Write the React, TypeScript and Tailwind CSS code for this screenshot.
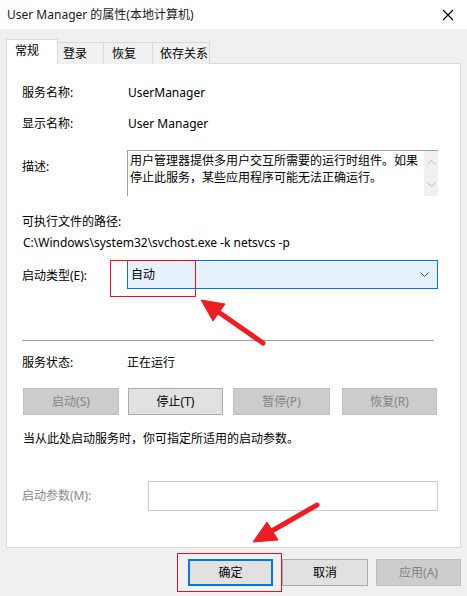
import React from 'react';

const font = { fontFamily: '"Noto Sans", "Noto Sans CJK SC", sans-serif' };

function Tab({ label, active, w, pl }: { label: string; active?: boolean; w: string; pl: string }) {
  return active ? (
    <div className={`relative z-10 h-[25px] bg-white border border-b-0 border-[#d9d9d9] flex items-center ${w} ${pl}`}>
      <span className="-mt-[3px]">{label}</span>
    </div>
  ) : (
    <div className={`h-[22px] bg-[#f0f0f0] border border-b-0 border-[#d9d9d9] -ml-px flex items-center ${w} ${pl}`}>
      <span>{label}</span>
    </div>
  );
}

function Btn({ label, disabled, w, className = '' }: { label: string; disabled?: boolean; w: string; className?: string }) {
  return (
    <div
      className={`h-[27px] flex items-center justify-center border ${w} ${className} ${
        disabled ? 'bg-[#cccccc] border-[#bfbfbf] text-[#838383]' : 'bg-[#e1e1e1] border-[#adadad] text-black'
      }`}
    >
      {label}
    </div>
  );
}

function Chevron({ up, color = '#606060' }: { up?: boolean; color?: string }) {
  return (
    <svg width="9" height="5" viewBox="0 0 9 5">
      <path d={up ? 'M0.5 4.5 L4.5 0.5 L8.5 4.5' : 'M0.5 0.5 L4.5 4.5 L8.5 0.5'} fill="none" stroke={color} strokeWidth="1" />
    </svg>
  );
}

export default function App() {
  return (
    <div style={font} className="relative w-[467px] h-[596px] bg-[#f0f0f0] text-[12px] text-black overflow-hidden">
      {/* title bar */}
      <div className="h-[29px] bg-white flex items-stretch">
        <div className="flex-1 flex items-center pl-[7px] text-[#1a1a1a]">User Manager 的属性(本地计算机)</div>
        <div className="w-[38px] flex items-center justify-center">
          <svg width="12" height="12" viewBox="0 0 12 12">
            <path d="M1 1 L11 11 M11 1 L1 11" stroke="#000000" strokeWidth="1.1" fill="none" />
          </svg>
        </div>
      </div>

      {/* tabs */}
      <div className="mt-[10px] ml-[6px] h-[25px] flex items-end">
        <Tab label="常规" active w="w-[52px]" pl="pl-[8px]" />
        <Tab label="登录" w="w-[47px]" pl="pl-[5px]" />
        <Tab label="恢复" w="w-[50px]" pl="pl-[8px]" />
        <Tab label="依存关系" w="w-[58px]" pl="pl-[7px]" />
      </div>

      {/* panel */}
      <div className="-mt-px ml-[6px] w-[455px] h-[485px] bg-white border border-[#d9d9d9] px-[15px] flex flex-col">
        <div className="mt-[19px] h-[20px] flex items-center">
          <span className="w-[105px]">服务名称:</span>
          <span className="pl-px">UserManager</span>
        </div>
        <div className="mt-[11px] h-[20px] flex items-center">
          <span className="w-[105px]">显示名称:</span>
          <span className="pl-px">User Manager</span>
        </div>
        <div className="mt-[16px] h-[46px] flex items-start">
          <span className="w-[105px] mt-[7px] leading-[20px]">描述:</span>
          <div className="w-[311px] h-[46px] border-t border-l border-[#a0a0a0] flex">
            <div className="flex-1 pl-[2px] pt-px leading-[17px] text-[12px]">
              用户管理器提供多用户交互所需要的运行时组件。如果停止此服务，某些应用程序可能无法正确运行。
            </div>
            <div className="w-[14px] h-[45px] bg-[#f0f0f0] flex flex-col items-center justify-between py-[9px]">
              <Chevron up color="#c0c0c0" />
              <Chevron color="#c0c0c0" />
            </div>
          </div>
        </div>
        <div className="mt-[16px] h-[20px] flex items-center">可执行文件的路径:</div>
        <div className="mt-px h-[20px] flex items-center pl-px">C:\Windows\system32\svchost.exe -k netsvcs -p</div>
        <div className="mt-[7px] h-[29px] flex items-center">
          <span className="w-[105px] mt-[3px]">启动类型(E):</span>
          <div className="w-[311px] h-[29px] bg-[#e5f1fb] border border-[#0078d7] flex items-center justify-between pl-[3px] pr-[8px]">
            <span>自动</span>
            <Chevron color="#404040" />
          </div>
        </div>
        <div className="mt-[51px] w-[412px] h-px bg-[#a0a0a0]" />
        <div className="mt-[12px] h-[20px] flex items-center">
          <span className="w-[105px]">服务状态:</span>
          <span>正在运行</span>
        </div>
        <div className="mt-[15px] flex">
          <Btn label="启动(S)" disabled w="w-[96px]" className="ml-px" />
          <Btn label="停止(T)" w="w-[95px]" className="ml-[9px]" />
          <Btn label="暂停(P)" disabled w="w-[97px]" className="ml-[10px]" />
          <Btn label="恢复(R)" disabled w="w-[95px]" className="ml-[12px]" />
        </div>
        <div className="mt-[14px] h-[20px] flex items-center pl-px">当从此处启动服务时，你可指定所适用的启动参数。</div>
        <div className="mt-[32px] h-[30px] flex items-center">
          <span className="w-[126px] text-[#8a8a8a]">启动参数(M):</span>
          <div className="w-[290px] h-[30px] border border-[#cccccc]" />
        </div>
      </div>

      {/* bottom buttons */}
      <div className="mt-[11px] pr-[6px] flex justify-end">
        <div className="w-[85px] h-[27px] bg-[#e1e1e1] border-2 border-[#0078d7] flex items-center justify-center">确定</div>
        <Btn label="取消" w="w-[86px]" className="ml-[9px]" />
        <Btn label="应用(A)" disabled w="w-[85px]" className="ml-[8px]" />
      </div>

      {/* annotations: red boxes + arrows */}
      <svg className="absolute left-0 top-0 pointer-events-none" width="467" height="596" viewBox="0 0 467 596">
        <rect x="110.5" y="260.5" width="85" height="36" fill="none" stroke="#e81123" strokeWidth="1" />
        <rect x="177.5" y="553.5" width="104" height="38" fill="none" stroke="#e81123" strokeWidth="1" />
        <g fill="#ee1c25" stroke="#ee1c25">
          <line x1="263" y1="343" x2="217" y2="311" strokeWidth="5" strokeLinecap="round" />
          <polygon points="201,300 225,304 213,321" strokeWidth="1" strokeLinejoin="round" />
          <line x1="317" y1="505" x2="270" y2="532" strokeWidth="5" strokeLinecap="round" />
          <polygon points="253,542 267,522 278,540" strokeWidth="1" strokeLinejoin="round" />
        </g>
      </svg>
    </div>
  );
}
